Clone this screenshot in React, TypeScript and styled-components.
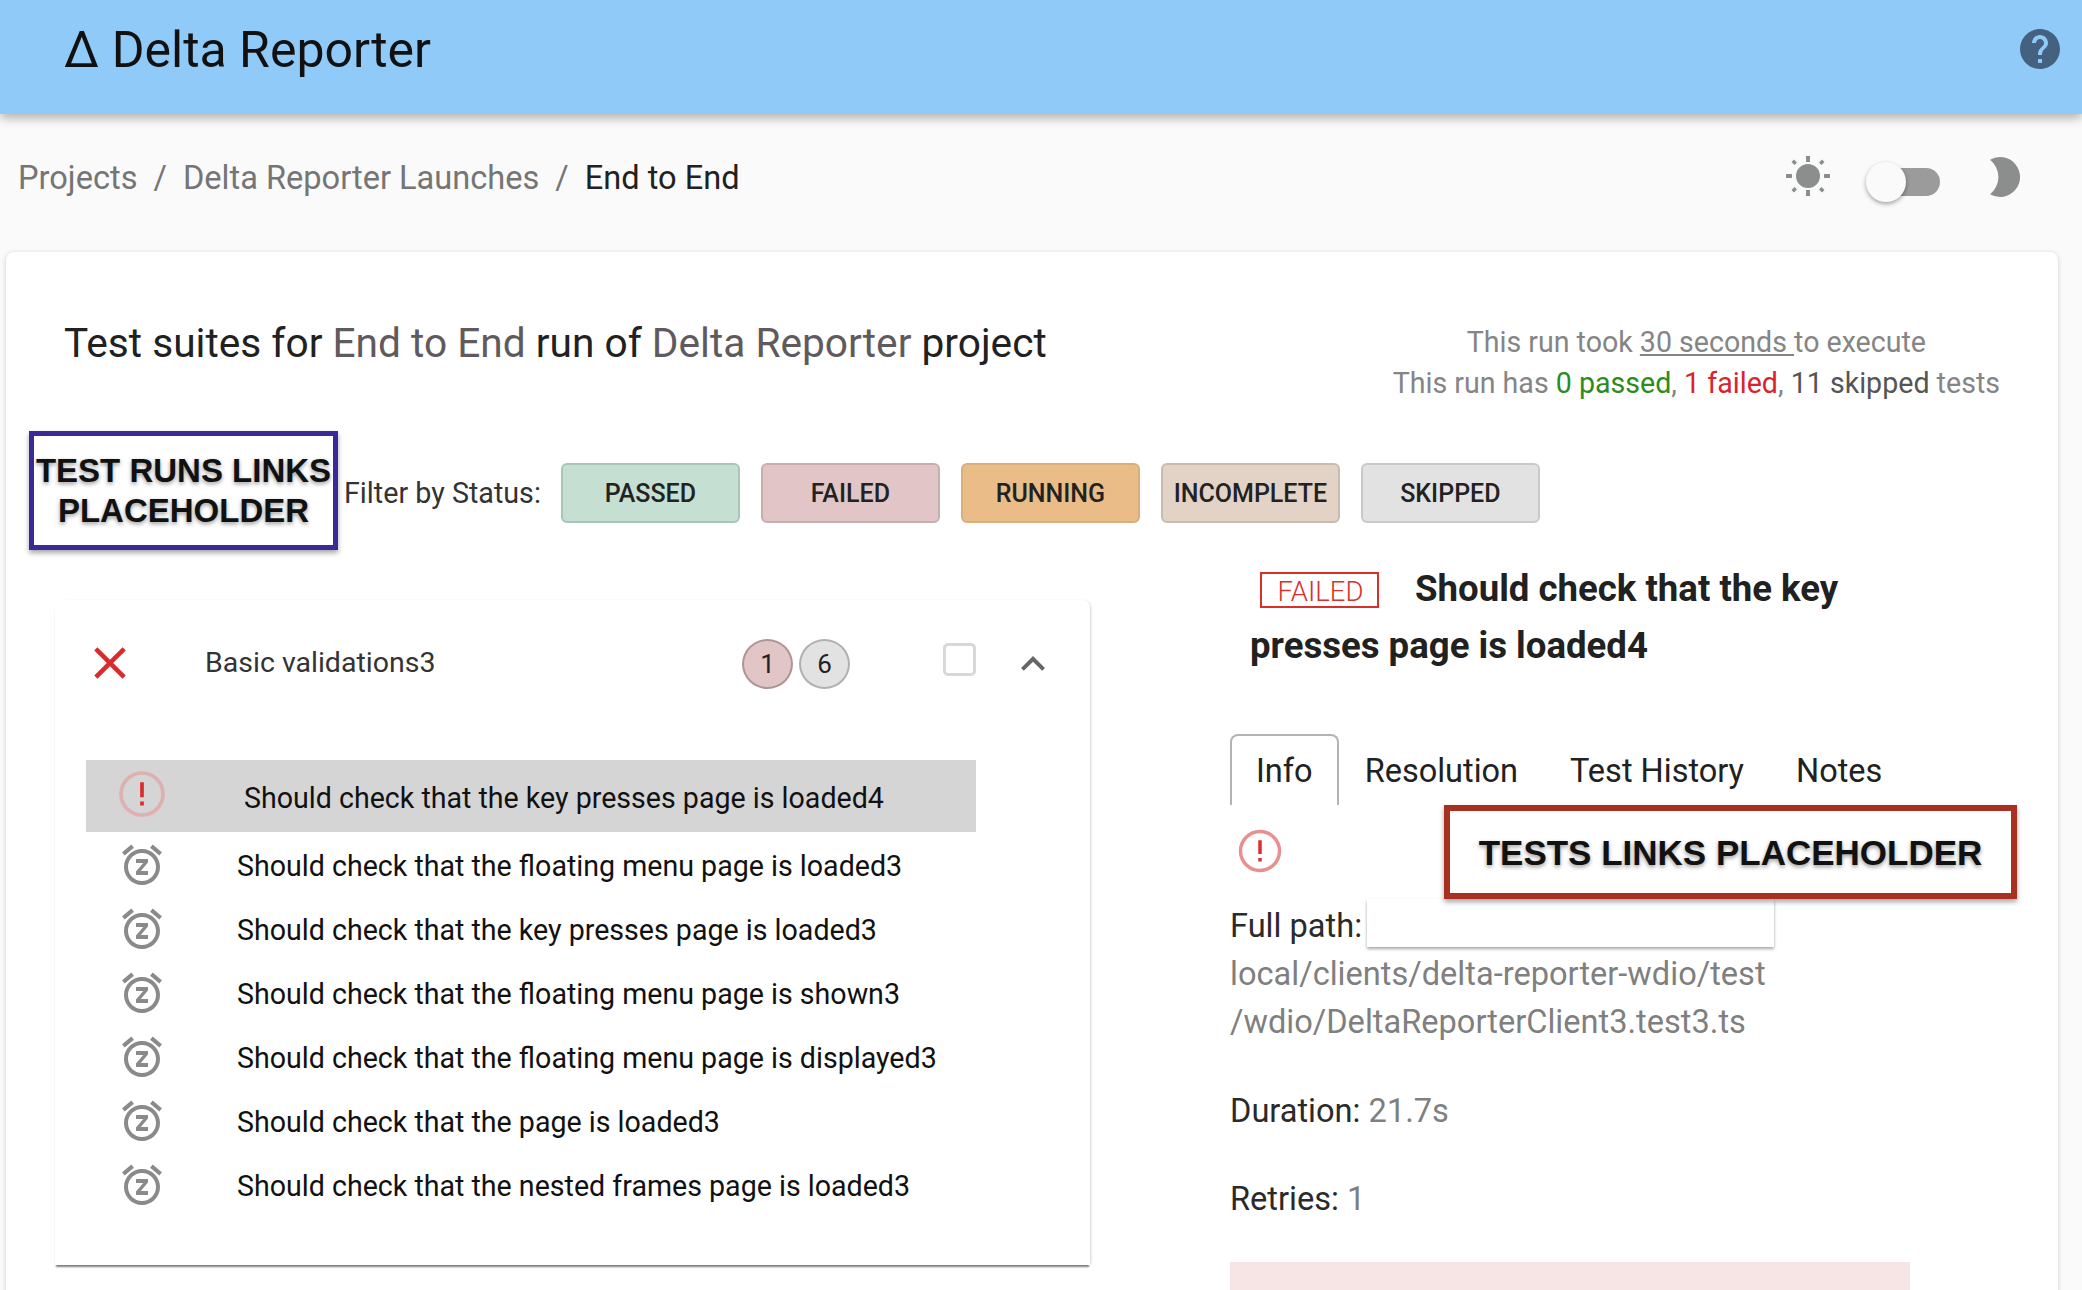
import React from 'react';
import styled, { createGlobalStyle } from 'styled-components';

const GlobalStyle = createGlobalStyle`
  html, body {
    margin: 0;
    padding: 0;
    background: #fafafa;
    overflow: hidden;
  }
  body {
    font-family: Roboto, "Liberation Sans", sans-serif;
    color: #212121;
  }
`;

const Page = styled.div`
  width: 2082px;
  height: 1290px;
  overflow: hidden;
  display: flex;
  flex-direction: column;
`;

const AppBar = styled.header`
  height: 114px;
  flex: none;
  display: flex;
  justify-content: space-between;
  align-items: flex-start;
  padding: 22px 18px 0 64px;
  box-sizing: border-box;
  background: #90caf9;
  box-shadow: 0 4px 10px rgba(0, 0, 0, 0.3);
  position: relative;
`;

const AppTitle = styled.h1`
  margin: 0;
  font-size: 50px;
  line-height: 56px;
  font-weight: 400;
  color: #111;
`;

const HelpButton = styled.svg`
  width: 48px;
  height: 48px;
  margin-top: 3px;
  fill: #44617f;
`;

const TopRow = styled.div`
  height: 124px;
  flex: none;
  display: flex;
  justify-content: space-between;
  align-items: center;
  padding: 0 54px 0 18px;
  box-sizing: border-box;
`;

const Breadcrumbs = styled.nav`
  display: flex;
  align-items: center;
  font-size: 32.6px;
  margin-top: 4px;
  color: #757575;
`;

const Separator = styled.span`
  margin: 0 16px;
`;

const CurrentCrumb = styled.span`
  color: #212121;
`;

const ThemeSwitch = styled.div`
  display: flex;
  align-items: center;
`;

const ThemeIcon = styled.svg`
  width: 46px;
  height: 46px;
  fill: #8c8e8d;
`;

const SwitchTrack = styled.div`
  position: relative;
  width: 68px;
  height: 28px;
  margin: 12px 42px 0 41px;
  border-radius: 14px;
  background: #9b9b9b;
`;

const SwitchThumb = styled.div`
  position: absolute;
  left: -6px;
  top: -6px;
  width: 40px;
  height: 40px;
  border-radius: 50%;
  background: #fafafa;
  box-shadow: 0 2px 4px rgba(0, 0, 0, 0.35);
`;

const MainCard = styled.main`
  flex: 1;
  margin: 14px 24px 0 6px;
  border-radius: 8px 8px 0 0;
  background: #fff;
  box-shadow: 0 1px 5px rgba(0, 0, 0, 0.18);
  padding-left: 23px;
`;

const RunHeader = styled.div`
  height: 179px;
  display: flex;
  justify-content: space-between;
  align-items: flex-start;
  padding: 0 58px 0 35px;
`;

const RunTitle = styled.h2`
  margin: 65px 0 0;
  font-size: 40.65px;
  line-height: 52px;
  font-weight: 400;
  color: #212121;
`;

const Muted = styled.span`
  color: #5f5a5e;
`;

const RunSummary = styled.div`
  margin-top: 70px;
  text-align: center;
  font-size: 28.6px;
  line-height: 41px;
  color: #858585;
`;

const SummaryTime = styled.span`
  text-decoration: underline;
`;

const Passed = styled.span`
  color: #2e8b1e;
`;

const Failed = styled.span`
  color: #d9232e;
`;

const Skipped = styled.span`
  color: #555;
`;

const FilterRow = styled.div`
  display: flex;
  align-items: center;
  height: 119px;
`;

const Placeholder = styled.div<{ $color: string }>`
  box-sizing: border-box;
  display: flex;
  align-items: center;
  justify-content: center;
  text-align: center;
  background: #fff;
  border: 5px solid ${(p) => p.$color};
  box-shadow: 0 3px 5px rgba(0, 0, 0, 0.35);
  font-family: "Liberation Sans", Arial, sans-serif;
  font-weight: 700;
  color: #111;
  text-shadow: 0 2px 4px rgba(0, 0, 0, 0.4);
`;

const RunsPlaceholder = styled(Placeholder)`
  width: 309px;
  height: 119px;
  font-size: 33px;
  line-height: 40px;
`;

const FilterLabel = styled.span`
  margin: 5px 20px 0 6px;
  font-size: 28.7px;
  color: #333;
`;

const FilterButtons = styled.div`
  display: flex;
  gap: 21px;
  margin-top: 5px;
`;

const FilterButton = styled.button<{ $bg: string; $border: string }>`
  width: 179px;
  height: 60px;
  padding: 0;
  border-radius: 6px;
  border: 2px solid ${(p) => p.$border};
  background: ${(p) => p.$bg};
  font-family: inherit;
  font-size: 25px;
  font-weight: 500;
  color: #222;
`;

const Columns = styled.div`
  display: grid;
  grid-template-columns: 1201px 680px;
  margin-top: 10px;
`;

const SuitePanel = styled.section`
  width: 1035px;
  height: 665px;
  margin: 40px 0 0 26px;
  background: #fff;
  border-radius: 8px 8px 0 0;
  box-shadow: 0 3px 2px -1px rgba(0, 0, 0, 0.5), 2px 0 3px -1px rgba(0, 0, 0, 0.15);
  box-sizing: border-box;
  padding: 0 0 0 31px;
`;

const SuiteHeader = styled.div`
  height: 126px;
  display: flex;
  align-items: center;
`;

const SuiteStatus = styled.svg`
  width: 54px;
  height: 54px;
  margin-left: -3px;
  fill: #d92b2b;
  flex: none;
`;

const SuiteName = styled.span`
  width: 537px;
  margin-left: 68px;
  font-size: 28.5px;
  position: relative;
  top: -1px;
  color: #333;
`;

const CountBadge = styled.span<{ $bg: string; $border: string }>`
  box-sizing: border-box;
  width: 51px;
  height: 50px;
  margin: 2px 6px 0 0;
  border-radius: 50%;
  display: flex;
  align-items: center;
  justify-content: center;
  font-size: 26px;
  background: ${(p) => p.$bg};
  border: 2px solid ${(p) => p.$border};
  color: #222;
`;

const SuiteCheck = styled.span`
  box-sizing: border-box;
  width: 33px;
  height: 33px;
  margin: -8px 0 0 87px;
  border: 3px solid #d8d8d8;
  border-radius: 5px;
`;

const ChevronIcon = styled.svg`
  width: 48px;
  height: 48px;
  margin: 2px 0 0 33px;
  fill: #666;
`;

const TestList = styled.ul`
  list-style: none;
  margin: 34px 0 0;
  padding: 0;
  width: 890px;
`;

const TestRow = styled.li<{ $selected?: boolean }>`
  display: flex;
  align-items: center;
  height: ${(p) => (p.$selected ? '72px' : '64px')};
  margin-bottom: ${(p) => (p.$selected ? '1px' : '0')};
  background: ${(p) => (p.$selected ? '#d5d5d5' : 'transparent')};
  font-size: 28.6px;
  color: #111;
`;

const TestIconSlot = styled.span<{ $selected?: boolean }>`
  width: ${(p) => (p.$selected ? '158px' : '151px')};
  padding-left: ${(p) => (p.$selected ? '28px' : '32px')};
  box-sizing: border-box;
  display: flex;
  flex: none;
`;

const TestIcon = styled.svg`
  width: 48px;
  height: 48px;
  fill: #8a8a8a;
`;

const SelectedTestIcon = styled.svg`
  width: 56px;
  height: 56px;
  margin-top: -4px;
`;

const TestName = styled.span<{ $selected?: boolean }>`
  position: relative;
  top: ${(p) => (p.$selected ? '2px' : '1px')};
`;

const DetailPanel = styled.section`
  position: relative;
`;

const TestTitle = styled.h3`
  width: 640px;
  margin: 0 0 60px;
  padding-left: 20px;
  font-size: 36.6px;
  line-height: 57px;
  font-weight: 700;
  color: #212121;
`;

const StatusTag = styled.span`
  display: inline-block;
  box-sizing: border-box;
  width: 119px;
  height: 36px;
  margin: 0 36px 0 10px;
  padding-left: 2px;
  border: 2px solid #d9302c;
  font-size: 27.5px;
  line-height: 35px;
  font-weight: 300;
  text-align: center;
  color: #d9302c;
`;

const Tabs = styled.div`
  display: flex;
  height: 71px;
  font-size: 32.5px;
  white-space: nowrap;
  color: #212121;
`;

const Tab = styled.div<{ $active?: boolean }>`
  box-sizing: border-box;
  padding: 16px 24px 0;
  border-radius: 8px 8px 0 0;
  border: 2px solid ${(p) => (p.$active ? '#b3b3b3' : 'transparent')};
  border-bottom: none;
`;

const TabPanel = styled.div`
  position: relative;
  font-size: 32.6px;
  line-height: 48px;
  color: #2a2a2a;
`;

const StatusIconRow = styled.div`
  height: 97px;
  display: flex;
  align-items: center;
  padding-left: 4px;
  padding-bottom: 5px;
  box-sizing: border-box;
`;

const BigStatusIcon = styled.svg`
  width: 52px;
  height: 52px;
`;

const DetailBlock = styled.div<{ $gap: number }>`
  margin-bottom: ${(p) => p.$gap}px;
`;

const DetailValue = styled.span`
  color: #7f7f7f;
`;

const PathLine = styled.div`
  color: #7f7f7f;
`;

const TestsPlaceholder = styled(Placeholder)`
  position: absolute;
  top: 0;
  left: 214px;
  width: 573px;
  height: 94px;
  border-width: 6px;
  padding-top: 2px;
  font-size: 35px;
  z-index: 2;
`;

const RedactedBox = styled.div`
  position: absolute;
  top: 94px;
  left: 137px;
  width: 407px;
  height: 48px;
  background: #fff;
  box-shadow: 0 2px 3px rgba(0, 0, 0, 0.35);
`;

const ErrorBox = styled.div`
  width: 680px;
  height: 60px;
  background: #f7e4e4;
`;

const snoozePath =
  'M9 11h3.63L9 15.2V17h6v-2h-3.63L15 10.8V9H9v2zm7.056-7.654l1.282-1.535 4.607 3.85-1.28 1.54zM3.336 7.19l-1.28-1.536L6.662 1.81l1.28 1.536zM12 6c3.86 0 7 3.14 7 7s-3.14 7-7 7-7-3.14-7-7 3.14-7 7-7m0-2c-4.97 0-9 4.03-9 9s4.03 9 9 9 9-4.03 9-9-4.03-9-9-9z';

const ErrorGlyph: React.FC<{ ring: string }> = ({ ring }) => (
  <>
    <circle cx="12" cy="12" r="9" fill="none" stroke={ring} strokeWidth="1.6" />
    <path d="M11.2 7h1.600v6.400h-1.600zM11.2 15.200h1.600v1.700h-1.600z" fill="#dd2c2c" />
  </>
);

const tests = [
  'Should check that the floating menu page is loaded3',
  'Should check that the key presses page is loaded3',
  'Should check that the floating menu page is shown3',
  'Should check that the floating menu page is displayed3',
  'Should check that the page is loaded3',
  'Should check that the nested frames page is loaded3',
];

const filters = [
  { label: 'PASSED', bg: '#c5e0d3', border: '#a9c5b8' },
  { label: 'FAILED', bg: '#e2c5c7', border: '#c9aeb0' },
  { label: 'RUNNING', bg: '#e9bc88', border: '#d9ae7c' },
  { label: 'INCOMPLETE', bg: '#e2d3c6', border: '#c9bbae' },
  { label: 'SKIPPED', bg: '#e3e2e3', border: '#c9c9c9' },
];

const App: React.FC = () => (
  <Page>
    <GlobalStyle />
    <AppBar>
      <AppTitle>Δ Delta Reporter</AppTitle>
      <HelpButton viewBox="0 0 24 24">
        <path d="M12 2C6.48 2 2 6.48 2 12s4.48 10 10 10 10-4.48 10-10S17.52 2 12 2zm1 17h-2v-2h2v2zm2.07-7.75l-.9.92C13.45 12.9 13 13.5 13 15h-2v-.5c0-1.1.45-2.1 1.17-2.83l1.24-1.26c.37-.36.59-.86.59-1.41 0-1.1-.9-2-2-2s-2 .9-2 2H8c0-2.21 1.79-4 4-4s4 1.79 4 4c0 .88-.36 1.68-.93 2.25z" />
      </HelpButton>
    </AppBar>

    <TopRow>
      <Breadcrumbs>
        <span>Projects</span>
        <Separator>/</Separator>
        <span>Delta Reporter Launches</span>
        <Separator>/</Separator>
        <CurrentCrumb>End to End</CurrentCrumb>
      </Breadcrumbs>
      <ThemeSwitch>
        <ThemeIcon viewBox="0 0 46 46">
          <circle cx="23" cy="23" r="12" />
          <path d="M21 3h4v6h-4zM21 37h4v6h-4zM1 21h6v4H1zM39 21h6v4h-6zM9 6.500l3 3-2.500 2.500-3-3zM37 6.500l2.500 2.500-3 3-2.500-2.500zM9.500 34l2.500 2.500-3 3-2.500-2.500zM36.500 34l3 3-2.500 2.500-3-3z" />
        </ThemeIcon>
        <SwitchTrack>
          <SwitchThumb />
        </SwitchTrack>
        <ThemeIcon viewBox="0 0 46 46">
          <path d="M8 6.700A20 20 0 1 1 8 41.300A22 22 0 0 0 8 6.700z" />
        </ThemeIcon>
      </ThemeSwitch>
    </TopRow>

    <MainCard>
      <RunHeader>
        <RunTitle>
          Test suites for <Muted>End to End</Muted> run of <Muted>Delta Reporter</Muted> project
        </RunTitle>
        <RunSummary>
          <div>
            This run took <SummaryTime>30 seconds </SummaryTime>to execute
          </div>
          <div>
            This run has <Passed>0 passed</Passed>, <Failed>1 failed</Failed>, <Skipped>11 skipped</Skipped> tests
          </div>
        </RunSummary>
      </RunHeader>

      <FilterRow>
        <RunsPlaceholder $color="#3a2a96">
          TEST RUNS LINKS
          <br />
          PLACEHOLDER
        </RunsPlaceholder>
        <FilterLabel>Filter by Status:</FilterLabel>
        <FilterButtons>
          {filters.map((f) => (
            <FilterButton key={f.label} $bg={f.bg} $border={f.border}>
              {f.label}
            </FilterButton>
          ))}
        </FilterButtons>
      </FilterRow>

      <Columns>
        <SuitePanel>
          <SuiteHeader>
            <SuiteStatus viewBox="0 0 24 24">
              <path d="M19 6.410 17.590 5 12 10.590 6.410 5 5 6.410 10.590 12 5 17.590 6.410 19 12 13.410 17.590 19 19 17.590 13.410 12z" />
            </SuiteStatus>
            <SuiteName>Basic validations3</SuiteName>
            <CountBadge $bg="#e2c5c7" $border="#ad9597">1</CountBadge>
            <CountBadge $bg="#e3e2e3" $border="#b0b0b0">6</CountBadge>
            <SuiteCheck />
            <ChevronIcon viewBox="0 0 24 24">
              <path d="M12 8l-6 6 1.410 1.410L12 10.830l4.590 4.580L18 14z" />
            </ChevronIcon>
          </SuiteHeader>
          <TestList>
            <TestRow $selected>
              <TestIconSlot $selected>
                <SelectedTestIcon viewBox="0 0 24 24">
                  <ErrorGlyph ring="#dfb0b0" />
                </SelectedTestIcon>
              </TestIconSlot>
              <TestName $selected>Should check that the key presses page is loaded4</TestName>
            </TestRow>
            {tests.map((name) => (
              <TestRow key={name}>
                <TestIconSlot>
                  <TestIcon viewBox="0 0 24 24">
                    <path d={snoozePath} />
                  </TestIcon>
                </TestIconSlot>
                <TestName>{name}</TestName>
              </TestRow>
            ))}
          </TestList>
        </SuitePanel>

        <DetailPanel>
          <TestTitle>
            <StatusTag>FAILED</StatusTag>
            Should check that the key presses page is loaded4
          </TestTitle>
          <Tabs>
            <Tab $active>Info</Tab>
            <Tab>Resolution</Tab>
            <Tab>Test History</Tab>
            <Tab>Notes</Tab>
          </Tabs>
          <TabPanel>
            <TestsPlaceholder $color="#a83020">TESTS LINKS PLACEHOLDER</TestsPlaceholder>
            <RedactedBox />
            <StatusIconRow>
              <BigStatusIcon viewBox="0 0 24 24">
                <ErrorGlyph ring="#e88f8f" />
              </BigStatusIcon>
            </StatusIconRow>
            <DetailBlock $gap={41}>
              <div>Full path:</div>
              <PathLine>local/clients/delta-reporter-wdio/test</PathLine>
              <PathLine>/wdio/DeltaReporterClient3.test3.ts</PathLine>
            </DetailBlock>
            <DetailBlock $gap={40}>
              Duration: <DetailValue>21.7s</DetailValue>
            </DetailBlock>
            <DetailBlock $gap={39}>
              Retries: <DetailValue>1</DetailValue>
            </DetailBlock>
            <ErrorBox />
          </TabPanel>
        </DetailPanel>
      </Columns>
    </MainCard>
  </Page>
);

export default App;
